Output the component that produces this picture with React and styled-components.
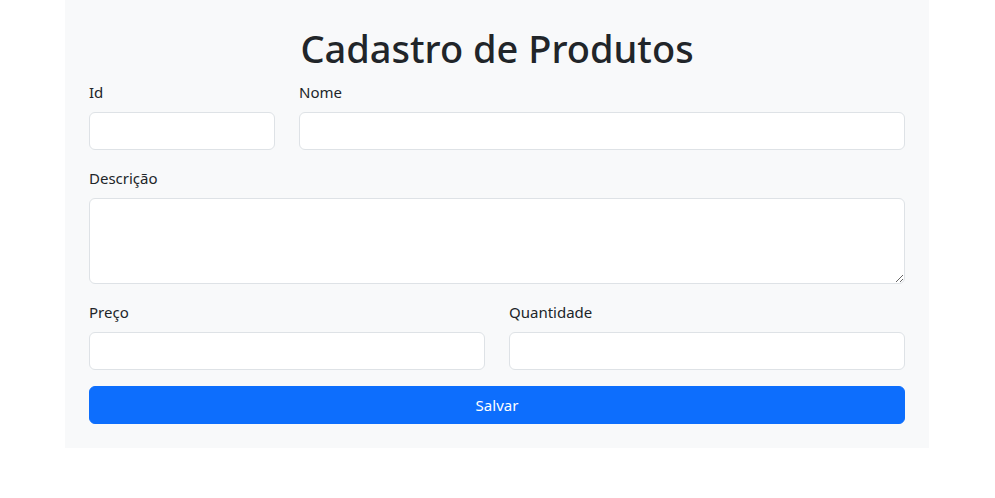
import React from "react";
import styled, { createGlobalStyle } from "styled-components";

const GlobalStyle = createGlobalStyle`
  * { box-sizing: border-box; }
  body {
    margin: 0;
    background: #fff;
    color: #212529;
    font-family: "Noto Sans", "Open Sans", sans-serif;
    font-size: 15px;
    line-height: 1.5;
  }
`;

const Page = styled.div`
  width: 864px;
  margin-left: 65px;
  padding: 24px;
  background: #f8f9fa;
`;

const Heading = styled.h1`
  margin: 0 0 8px;
  text-align: center;
  font-size: 38px;
  font-weight: 500;
  line-height: 48px;
  letter-spacing: 0;
`;

const Form = styled.form`
  display: flex;
  flex-direction: column;
  gap: 16px;
`;

const Row = styled.div`
  display: grid;
  grid-template-columns: ${(props) => props.$cols || "1fr"};
  column-gap: 24px;
`;

const Field = styled.div`
  display: flex;
  flex-direction: column;
`;

const Label = styled.label`
  display: block;
  height: 24px;
  margin-bottom: 8px;
  font-size: 15px;
  line-height: 24px;
`;

const Input = styled.input`
  display: block;
  width: 100%;
  height: 38px;
  padding: 6px 12px;
  border: 1px solid #dee2e6;
  border-radius: 6px;
  background: #fff;
  font: inherit;
  color: #212529;
  outline: none;
`;

const TextArea = styled.textarea`
  display: block;
  width: 100%;
  height: 86px;
  padding: 6px 12px;
  border: 1px solid #dee2e6;
  border-radius: 6px;
  background: #fff;
  font: inherit;
  color: #212529;
  resize: vertical;
  outline: none;
`;

const Button = styled.button`
  display: block;
  width: 100%;
  height: 38px;
  border: 1px solid #0d6efd;
  border-radius: 6px;
  background: #0d6efd;
  color: #fff;
  font: inherit;
  font-size: 15px;
  cursor: pointer;
`;

const App = () => {
  return (
    <>
      <GlobalStyle />
      <Page>
        <Heading>Cadastro de Produtos</Heading>
        <Form onSubmit={(e) => e.preventDefault()}>
          <Row $cols="186px 1fr">
            <Field>
              <Label htmlFor="id">Id</Label>
              <Input id="id" type="text" />
            </Field>
            <Field>
              <Label htmlFor="nome">Nome</Label>
              <Input id="nome" type="text" />
            </Field>
          </Row>
          <Row>
            <Field>
              <Label htmlFor="descricao">Descrição</Label>
              <TextArea id="descricao" rows={3} />
            </Field>
          </Row>
          <Row $cols="1fr 1fr">
            <Field>
              <Label htmlFor="preco">Preço</Label>
              <Input id="preco" type="number" />
            </Field>
            <Field>
              <Label htmlFor="quantidade">Quantidade</Label>
              <Input id="quantidade" type="number" />
            </Field>
          </Row>
          <Button type="submit">Salvar</Button>
        </Form>
      </Page>
    </>
  );
};

export default App;
